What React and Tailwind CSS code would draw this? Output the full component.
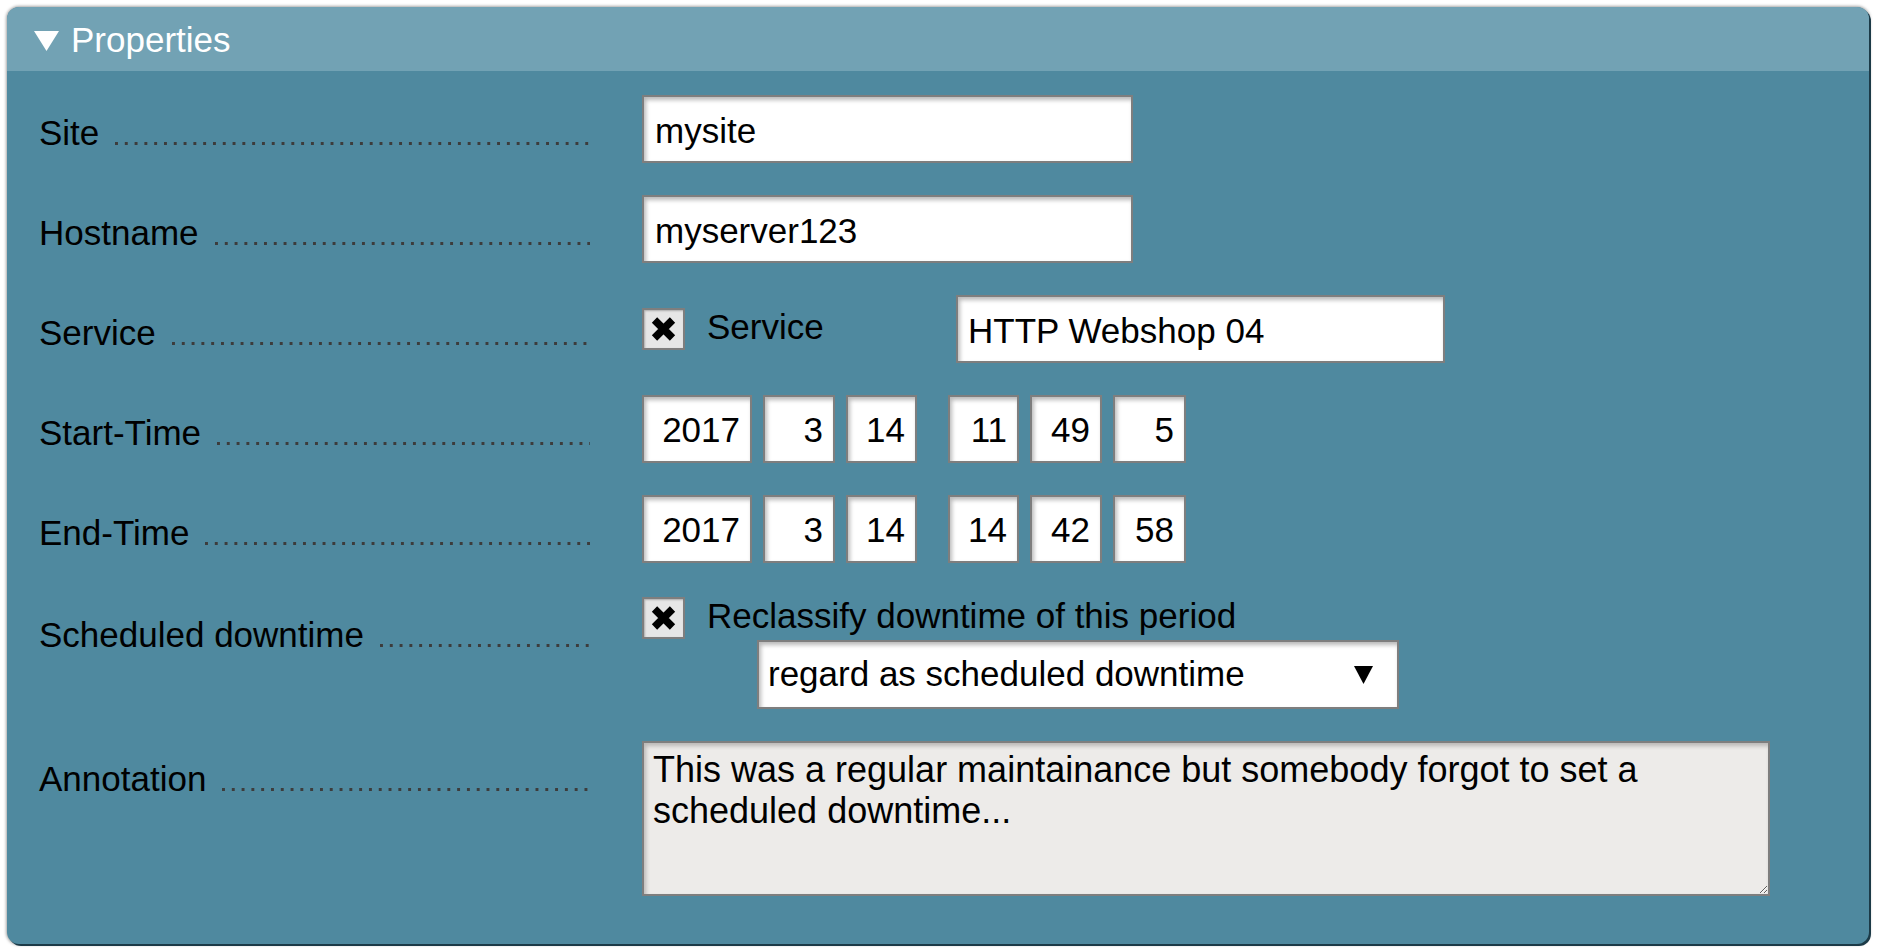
import React from "react";

const font = { fontFamily: '"Liberation Sans", Arial, sans-serif' };

const boxCls =
  "border-2 border-[#7e7e7e] bg-white shadow-[inset_2px_3px_4px_rgba(0,0,0,0.28)] outline-none text-[35px] text-black";

function Label({ text }) {
  return (
    <div className="w-[603px] h-[68px] shrink-0 pr-[52px] flex items-baseline leading-[76px] text-[35px] text-black">
      <span className="whitespace-nowrap">{text}</span>
      <span className="flex-1 ml-[16px] h-[3px] bg-[linear-gradient(to_right,#3c3c3c_3px,transparent_3px)] bg-[length:9.8px_3px] bg-repeat-x"></span>
    </div>
  );
}

function Check({ text }) {
  return (
    <div className="flex items-center">
      <div className="w-[43px] h-[42px] border-2 border-[#7e7e7e] bg-[#e6e6e6] shadow-[inset_1px_1px_2px_rgba(0,0,0,0.25)] flex items-center justify-center">
        <svg width="25" height="24" viewBox="0 0 25 24">
          <path d="M3.5 3 L21.5 21 M21.5 3 L3.5 21" stroke="#000" strokeWidth="7.5" strokeLinecap="butt" />
        </svg>
      </div>
      <span className="ml-[22px] -mt-[6px] text-[35px] text-black leading-none">{text}</span>
    </div>
  );
}

function Num({ value, w }) {
  return (
    <input
      readOnly
      value={value}
      className={`${boxCls} h-[68px] text-right pr-[10px] pt-[2px] ${w}`}
      style={font}
    />
  );
}

function TimeRow({ label, date, time }) {
  return (
    <div className="flex items-start">
      <Label text={label} />
      <div className="flex items-center">
        <div className="flex gap-[11px]">
          <Num value={date[0]} w="w-[110px]" />
          <Num value={date[1]} w="w-[72px]" />
          <Num value={date[2]} w="w-[71px]" />
        </div>
        <div className="flex gap-[11px] ml-[31px]">
          <Num value={time[0]} w="w-[71px]" />
          <Num value={time[1]} w="w-[72px]" />
          <Num value={time[2]} w="w-[73px]" />
        </div>
      </div>
    </div>
  );
}

export default function App() {
  return (
    <div className="w-[1877px] h-[951px] bg-white p-[7px]" style={font}>
      <div className="w-[1862px] h-[937px] rounded-[12px] overflow-hidden bg-[#4f899f] shadow-[2px_2px_0_#1c3a47,0_0_3px_1px_rgba(0,0,0,0.35)] flex flex-col">
        {/* Header */}
        <div className="h-[64px] bg-[#72a2b4] flex items-center pl-[27px] shrink-0">
          <svg width="25" height="20" viewBox="0 0 25 20" className="mt-[3px]">
            <polygon points="0,0 25,0 12.5,20" fill="#fff" />
          </svg>
          <span className="ml-[12px] text-[35px] text-white leading-none">Properties</span>
        </div>

        {/* Body */}
        <div className="pl-[32px] pt-[24px] flex flex-col gap-[32px]">
          <div className="flex items-start">
            <Label text="Site" />
            <input readOnly value="mysite" className={`${boxCls} w-[491px] h-[68px] px-[11px] pt-[4px]`} style={font} />
          </div>

          <div className="flex items-start">
            <Label text="Hostname" />
            <input readOnly value="myserver123" className={`${boxCls} w-[491px] h-[68px] px-[11px] pt-[4px]`} style={font} />
          </div>

          <div className="flex items-start">
            <Label text="Service" />
            <div className="flex items-center h-[68px]">
              <div className="w-[314px]">
                <Check text="Service" />
              </div>
              <input readOnly value="HTTP Webshop 04" className={`${boxCls} w-[489px] h-[68px] px-[10px] pt-[4px]`} style={font} />
            </div>
          </div>

          <TimeRow label="Start-Time" date={["2017", "3", "14"]} time={["11", "49", "5"]} />
          <TimeRow label="End-Time" date={["2017", "3", "14"]} time={["14", "42", "58"]} />

          <div className="flex items-start mt-[2px]">
            <Label text="Scheduled downtime" />
            <div className="flex flex-col">
              <Check text="Reclassify downtime of this period" />
              <div className={`${boxCls} ml-[115px] mt-[1px] w-[642px] h-[69px] flex items-center justify-between pl-[9px] pr-[24px]`}>
                <span>regard as scheduled downtime</span>
                <svg width="19" height="18" viewBox="0 0 19 18">
                  <polygon points="0,0 19,0 9.5,18" fill="#000" />
                </svg>
              </div>
            </div>
          </div>

          <div className="flex items-start">
            <Label text="Annotation" />
            <textarea
              readOnly
              defaultValue="This was a regular maintainance but somebody forgot to set a scheduled downtime..."
              className="w-[1128px] h-[155px] border-2 border-[#7e7e7e] bg-[#edebe9] shadow-[inset_2px_3px_4px_rgba(0,0,0,0.22)] outline-none text-[36px] leading-[41px] text-black px-[9px] pt-[6px]"
              style={font}
            />
          </div>
        </div>
      </div>
    </div>
  );
}
